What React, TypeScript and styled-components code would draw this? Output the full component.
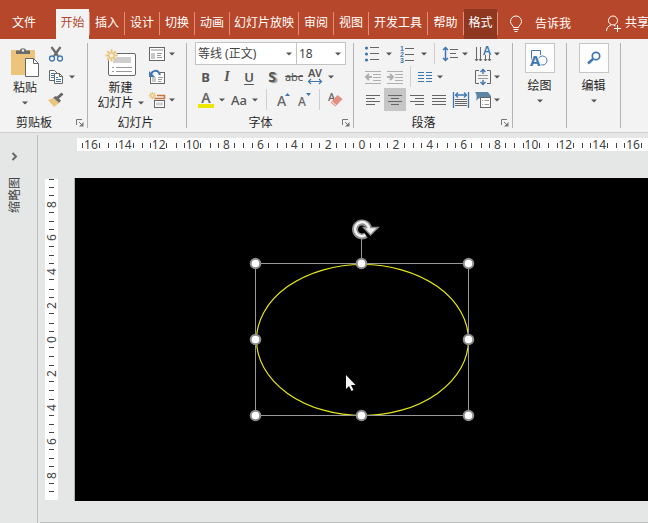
import React from "react";
import styled, { createGlobalStyle, css } from "styled-components";

const GlobalStyle = createGlobalStyle`
  *, *::before, *::after { box-sizing: border-box; }
  body {
    margin: 0;
    background: #e5e7e6;
    color: #262626;
    font: 12px/16px "Noto Sans", "Noto Sans CJK SC", sans-serif;
    overflow: hidden;
  }
  button, select { font: inherit; color: inherit; }
  svg { display: block; flex: none; overflow: visible; }
`;

const GREY = "#666666";
const BLUE = "#3f77b0";
const GOLD = "#ecc47a";

/* ---------- layout ---------- */

const Shell = styled.div`
  display: flex;
  flex-direction: column;
  min-height: 100vh;
`;

const TabBar = styled.nav`
  display: flex;
  align-items: stretch;
  padding-top: 9px;
  background: #b7472a;
  color: #fff;
  white-space: nowrap;
  overflow: hidden;
`;

const PlainButton = styled.button`
  display: flex;
  align-items: center;
  justify-content: center;
  padding: 0;
  border: 0;
  background: none;
`;

const Tab = styled(PlainButton)<{ $width: number; $look?: "active" | "context" }>`
  flex: none;
  width: ${(p) => p.$width}px;
  height: 30px;
  padding-bottom: 2px;
  ${(p) => p.$look === "active" && css`background: #f3f3f3; color: #b7472a;`}
  ${(p) => p.$look === "context" && css`background: #8f3721;`}
`;

const TabSpace = styled.span`
  flex: none;
  width: 8px;
`;

const TabDivider = styled.span`
  flex: none;
  width: 1px;
  height: 23px;
  margin-top: 3px;
  background: #e08f7c;
`;

const TellMe = styled(PlainButton)`
  flex: none;
  gap: 13px;
  margin-left: 12px;
`;

const Share = styled(PlainButton)`
  flex: none;
  gap: 4px;
  margin-left: auto;
  margin-right: -1px;
  padding-bottom: 2px;
`;

const Ribbon = styled.div`
  display: flex;
  padding-top: 3px;
  background: #f3f3f3;
  border-bottom: 1px solid #cfd0cf;
  overflow: hidden;
`;

const GroupBox = styled.section<{ $width: number }>`
  flex: none;
  width: ${(p) => p.$width}px;
  display: flex;
  flex-direction: column;
`;

const GroupDivider = styled.span`
  flex: none;
  width: 1px;
  margin: 1px 0 4px;
  background: #b3b3b3;
`;

const GroupBody = styled.div<{ $pad?: number }>`
  display: flex;
  height: 69px;
  padding-left: ${(p) => p.$pad ?? 0}px;
`;

const GroupFooter = styled.footer`
  display: flex;
  align-items: flex-end;
  height: 21px;
  padding: 4px 3px 1px 0;
`;

const GroupLabel = styled.span`
  flex: 1;
  text-align: center;
  line-height: 16px;
`;

const Launcher = styled(PlainButton)`
  width: 16px;
  height: 12px;
  justify-content: flex-end;
  align-items: flex-start;
`;

const Rows = styled.div<{ $width?: number }>`
  flex: none;
  width: ${(p) => (p.$width ? `${p.$width}px` : "auto")};
  display: flex;
  flex-direction: column;
`;

const Row = styled.div<{ $pad?: number }>`
  display: flex;
  height: 23px;
  padding-left: ${(p) => p.$pad ?? 0}px;
`;

const ToolButton = styled(PlainButton)<{ $width: number; $pressed?: boolean }>`
  flex: none;
  width: ${(p) => p.$width}px;
  background: ${(p) => (p.$pressed ? "#c6c6c6" : "none")};
`;

const Glyph = styled.span<{ $look?: "bold" | "italic" | "under" | "shadow" | "strike" }>`
  color: #555;
  font-size: 13px;
  font-weight: 500;
  ${(p) => p.$look === "bold" && css`font-weight: 700;`}
  ${(p) => p.$look === "italic" && css`font-family: "Liberation Serif", serif; font-size: 14px; font-style: italic; font-weight: 700;`}
  ${(p) => p.$look === "under" && css`font-weight: 600; text-decoration: underline; text-underline-offset: 2px;`}
  ${(p) => p.$look === "shadow" && css`font-size: 14px; font-weight: 700; text-shadow: 2px 1px 1px #999;`}
  ${(p) => p.$look === "strike" && css`font-size: 11px; font-weight: 400; text-decoration: line-through;`}
`;

const ToolDivider = styled.span<{ $space: number }>`
  flex: none;
  width: ${(p) => p.$space}px;
  display: flex;
  justify-content: center;
  padding: 1px 0;
  &::before { content: ""; width: 1px; background: #cfcfcf; }
`;

const BigButton = styled(PlainButton)<{ $width: number }>`
  flex: none;
  width: ${(p) => p.$width}px;
  flex-direction: column;
  justify-content: flex-start;
  padding-top: 3px;
  line-height: 15px;
`;

const BigIcon = styled.span`
  display: flex;
  align-items: center;
  height: 35px;
`;

const CaretLine = styled.span`
  display: flex;
  align-items: center;
  justify-content: center;
  gap: 4px;
  height: 15px;
`;

const MenuButton = styled(BigButton)`
  padding-top: 1px;
`;

const IconFrame = styled.span`
  display: flex;
  align-items: center;
  justify-content: center;
  width: 30px;
  height: 30px;
  margin-bottom: 5px;
  border: 1px solid #c6c6c6;
  background: #fdfdfd;
`;

const ComboWrap = styled.label<{ $width: number }>`
  display: grid;
  align-items: center;
  width: ${(p) => p.$width}px;
  & + & { margin-left: -1px; }
  > * { grid-area: 1 / 1; }
  > svg { justify-self: end; margin-right: 5px; pointer-events: none; }
`;

const Combo = styled.select`
  width: 100%;
  height: 23px;
  padding: 0 2px;
  border: 1px solid #c3c3c3;
  border-radius: 0;
  background: #fff;
  color: #444;
  appearance: none;
`;

/* ---------- workspace ---------- */

const Workspace = styled.main`
  flex: 1;
  display: flex;
`;

const ThumbPane = styled.aside`
  flex: none;
  width: 38px;
  margin-top: 2px;
  padding: 17px 8px 0 0;
  border-right: 1px solid #bcbebd;
  display: flex;
  flex-direction: column;
  align-items: center;
  gap: 16px;
`;

const PaneTitle = styled.span`
  writing-mode: vertical-rl;
  text-orientation: sideways;
  transform: rotate(180deg);
  line-height: 16px;
  color: #444;
`;

const Editor = styled.div`
  flex: 1;
  min-width: 0;
  display: flex;
  flex-direction: column;
  padding-top: 5px;
`;

const HRuler = styled.div`
  height: 13px;
  margin-left: 39px;
  overflow: hidden;
  background: #fff;
`;

const HScale = styled.div`
  display: grid;
  grid-template-columns: repeat(17, 1fr);
  height: 13px;
  margin: 0 -2px 0 -3px;
`;

const Stage = styled.div`
  flex: 1;
  display: flex;
  margin: 27px 0 21px;
`;

const VRuler = styled.div`
  flex: none;
  width: 13px;
  margin: 1px 16px 1px 7px;
  display: flex;
  flex-direction: column;
  justify-content: space-between;
  background: #fff;
`;

const VScale = styled.div`
  flex: 1;
  display: grid;
  grid-template-rows: repeat(9, 1fr);
  margin-top: 7px;
  margin-bottom: 8px;
`;

const Unit = styled.div`
  display: grid;
  align-items: center;
  justify-items: center;
  min-height: 0;
  > * { grid-area: 1 / 1; }
`;

const Ticks = styled.span<{ $vertical?: boolean }>`
  display: flex;
  justify-content: space-between;
  ${(p) => (p.$vertical
    ? css`flex-direction: column; height: 100%; margin-right: 1px;`
    : css`width: 100%; margin-bottom: 1px;`)}
`;

const Tick = styled.i<{ $vertical?: boolean; $blank?: boolean }>`
  flex: none;
  width: ${(p) => (p.$vertical ? 5 : 1)}px;
  height: ${(p) => (p.$vertical ? 1 : 5)}px;
  margin: ${(p) => (p.$vertical ? "0 auto" : "0")};
  background: ${(p) => (p.$blank ? "transparent" : "#444")};
`;

const Num = styled.span<{ $vertical?: boolean }>`
  color: #444;
  line-height: 13px;
  margin-bottom: ${(p) => (p.$vertical ? 0 : 2)}px;
  ${(p) => p.$vertical && css`writing-mode: vertical-rl; transform: rotate(180deg);`}
`;

const Slide = styled.div`
  position: relative;
  flex: 1;
  min-width: 0;
  border-left: 1px solid #b0b2b1;
  background: #000;
  overflow: hidden;
`;

const SelectedShape = styled.svg`
  position: absolute;
  left: 172px;
  top: 36px;
`;

const Pointer = styled.svg`
  position: absolute;
  left: 270px;
  top: 196px;
`;

const BottomLine = styled.div`
  height: 1px;
  margin-left: 2px;
  background: #bcbebd;
`;

/* ---------- icons ---------- */

const Caret = () => (
  <svg width="6" height="4" viewBox="0 0 6 4"><path d="M0 .5h6L3 3.500z" fill="#555" /></svg>
);

const Svg = ({ w = 16, h = 16, children }: { w?: number; h?: number; children: React.ReactNode }) => (
  <svg width={w} height={h} viewBox={`0 0 ${w} ${h}`} fill="none" stroke={GREY} aria-hidden="true">{children}</svg>
);

const BulbIcon = () => (
  <Svg w={12} h={17}>
    <g stroke="#fff">
      <path d="M3.5 11.5c0-2-3-3-3-6a5 5 0 0 1 11 0c0 3-3 4-3 6z" />
      <path d="M3.5 13.5h5M4.500 15.500h3" />
    </g>
  </Svg>
);

const PersonIcon = () => (
  <Svg w={15} h={17}>
    <g stroke="#fff">
      <circle cx="7" cy="5.500" r="4.500" />
      <path d="M.5 16c0-3 2-5 4.500-6M8 10.500l1.500.5M8 13.500h7M11.500 10v7" />
    </g>
  </Svg>
);

const PasteIcon = () => (
  <Svg w={28} h={31}>
    <path d="M0 3h24v25H0z" fill={GOLD} stroke="none" />
    <path d="M5 7V3.500h4C9 .5 15 .5 15 3.500h4V7z" fill="#6b6b6b" stroke="none" />
    <circle cx="12" cy="3.500" r="1.200" fill="#f3f3f3" stroke="none" />
    <path d="M14.500 11.500h8l5 5v13h-13z" fill="#fff" />
    <path d="M22.500 11.500v5h5" />
  </Svg>
);

const CutIcon = () => (
  <Svg>
    <path d="M3.500 1l6.500 9M12.500 1L6 10" strokeWidth="2.200" stroke="#6b6b6b" />
    <circle cx="4" cy="12.500" r="2.500" stroke={BLUE} strokeWidth="1.300" />
    <circle cx="12" cy="12.500" r="2.500" stroke={BLUE} strokeWidth="1.300" />
  </Svg>
);

const CopyIcon = () => (
  <Svg>
    <path d="M1.500 1.500h5l3 3v7h-8z" fill="#fff" />
    <path d="M3 4.500h3M3 6.500h3M3 8.500h3" stroke={BLUE} />
    <path d="M6.500 4.500h5l3 3v7h-8z" fill="#fff" />
    <path d="M11.500 4.500v3h3" />
    <path d="M8 8.500h2M8 10.500h5M8 12.500h5" stroke={BLUE} />
  </Svg>
);

const BrushIcon = () => (
  <Svg>
    <path d="M0 8l5-2 6 5-5 4z" fill={GOLD} stroke="none" />
    <path d="M5 5.500l3-1.500 5 4.500-2 2.500z" fill="#6b6b6b" stroke="none" />
    <path d="M9.500 6l5-4.500" strokeWidth="3" />
  </Svg>
);

const Burst = ({ x, y, r }: { x: number; y: number; r: number }) => (
  <g transform={`translate(${x} ${y})`} stroke={GOLD} strokeWidth={r > 4 ? 2 : 1.4}>
    {[0, 45, 90, 135].map((a) => (
      <path key={a} d={`M${-r} 0H${-r * 0.4}M${r * 0.4} 0H${r}`} transform={`rotate(${a})`} />
    ))}
    <circle r={r * 0.4} strokeWidth="1" />
  </g>
);

const NewSlideIcon = () => (
  <Svg w={31} h={28}>
    <rect x="3.500" y="4.500" width="27" height="22" rx="1.500" fill="#fff" />
    <path d="M8 8h18v6H8z" fill="#cfcfcf" stroke="none" />
    <path d="M7 18.500h2M11 18.500h16M7 22.500h2M11 22.500h16" stroke="#999" />
    <circle cx="6" cy="6" r="6" fill="#f3f3f3" stroke="none" />
    <Burst x={6.5} y={6.5} r={6} />
  </Svg>
);

const LayoutIcon = () => (
  <Svg>
    <rect x=".5" y="1.500" width="15" height="13" fill="#fff" />
    <path d="M2 3h12v2H2zM2 7h4v6H2z" fill="#c8c8c8" stroke="none" />
    <path d="M8 7.500h5M8 9.500h4M8 11.500h5" stroke="#999" />
  </Svg>
);

const ResetIcon = () => (
  <Svg>
    <rect x="1.500" y="3.500" width="14" height="11" fill="#fff" />
    <path d="M3 8h4v5H3z" fill="#c8c8c8" stroke="none" />
    <path d="M9 8.500h5M9 10.500h4M9 12.500h3" stroke="#999" />
    <path d="M0 0h11v6H0z" fill="#f3f3f3" stroke="none" />
    <path d="M2 6c1-5 7-6 9 0" stroke={BLUE} strokeWidth="2" />
    <path d="M0 2v6h6z" fill={BLUE} stroke="none" />
  </Svg>
);

const SectionIcon = () => (
  <Svg>
    <Burst x={3.5} y={3.5} r={3.5} />
    <path d="M8 3.500h7.500v3h-10" stroke="#c8733d" strokeWidth="1.500" />
    <rect x="5.500" y="8.500" width="10" height="7" fill="#fff" />
    <path d="M7 10.500h7v3H7z" fill="#d0d0d0" stroke="none" />
  </Svg>
);

const LauncherIcon = () => (
  <svg width="8" height="8" viewBox="0 0 8 8" fill="none" stroke="#777">
    <path d="M.5 6V.5H6M3 3l3 3" /><path d="M7.500 3v4.500H3z" fill="#777" stroke="none" />
  </svg>
);

const SpacingIcon = () => (
  <svg width="16" height="16" viewBox="0 0 16 16" fill="none">
    <text x="8" y="8" textAnchor="middle" fontSize="11" fontWeight="600" fill="#555">AV</text>
    <path d="M1 12.500h14M4 10L1.500 12.500 4 15M12 10l2.500 2.500L12 15" stroke={BLUE} strokeWidth="1.200" />
  </svg>
);

const FontColorIcon = () => (
  <svg width="16" height="18" viewBox="0 0 16 18">
    <text x="8" y="12" textAnchor="middle" fontSize="14" fontWeight="600" fill="#666">A</text>
    <path d="M0 13h16v4H0z" fill="#ece800" />
  </svg>
);

const ResizeFontIcon = ({ up }: { up?: boolean }) => (
  <svg width="14" height="16" viewBox="0 0 14 16">
    <text x="0" y="14" fontSize={up ? 14 : 12} fontWeight="500" fill="#666">A</text>
    <path d={up ? "M8 4l2.500-3L13 4z" : "M8 1h5l-2.500 3z"} fill={BLUE} />
  </svg>
);

const EraserIcon = () => (
  <svg width="16" height="16" viewBox="0 0 16 16">
    <text x="1" y="9" fontSize="11" fontWeight="500" fill="#666">A</text>
    <path d="M3.500 10.500l7-7.500 5 4-7 7.500z" fill="#e58e82" />
    <path d="M4.500 9.500l5 4" stroke="#f3f3f3" />
  </svg>
);

const BulletsIcon = () => (
  <Svg>
    <g fill={BLUE} stroke="none"><circle cx="2.500" cy="2" r="1.600" /><circle cx="2.500" cy="8" r="1.600" /><circle cx="2.500" cy="14" r="1.600" /></g>
    <path d="M6 1.500h9M6 7.500h9M6 13.500h9" />
  </Svg>
);

const NumbersIcon = () => (
  <svg width="16" height="18" viewBox="0 0 16 18" fontFamily="Liberation Sans, sans-serif">
    {[1, 2, 3].map((n) => (
      <text key={n} x="1" y={n * 6} fontSize="7" fontWeight="700" fill={BLUE}>{n}</text>
    ))}
    <path d="M6 3.500h9M6 9.500h9M6 15.500h9" stroke={GREY} />
  </svg>
);

const LineSpacingIcon = () => (
  <Svg>
    <path d="M3.500 1v14M1 4l2.500-2.500L6 4M1 12l2.500 2.500L6 12" stroke={BLUE} strokeWidth="1.500" />
    <path d="M8 3.500h8M8 7.500h6M8 11.500h8" />
  </Svg>
);

const TextDirectionIcon = () => (
  <svg width="16" height="16" viewBox="0 0 16 16" fill="none">
    <path d="M1.500 1v14M5.500 1v14M10.500 9v6M14.500 9v6M0 13l1.500 2L3 13M4 13l1.500 2L7 13M9 13l1.500 2 1.500-2M13 13l1.500 2 1.500-2" stroke={GREY} />
    <text x="8" y="9" fontSize="12" fontWeight="600" fill={BLUE}>A</text>
  </svg>
);

const IndentIcon = ({ outdent }: { outdent?: boolean }) => (
  <Svg>
    <g stroke="#b0b0b0">
      <path d="M0 2.500h16M8 5.500h8M8 8.500h8M8 11.500h8M0 14.500h16" />
      <path d={outdent ? "M7 8H1M4 5L1 8l3 3" : "M0 8h6M3 5l3 3-3 3"} strokeWidth="2" />
    </g>
  </Svg>
);

const ColumnsIcon = () => (
  <Svg w={14} h={12}>
    <path d="M0 1.500h6M0 4.500h6M0 7.500h6M0 10.500h6M8 1.500h6M8 4.500h6M8 7.500h6M8 10.500h6" stroke={BLUE} />
  </Svg>
);

const AlignTextIcon = () => (
  <Svg>
    <path d="M4 1.500H.5v13H4M12 1.500h3.500v13H12" />
    <path d="M3 6.500h10M3 9.500h10" stroke="#999" />
    <path d="M8 0v5M5.500 3L8 .5 10.500 3M8 11v5M5.500 13L8 15.500l2.500-2.500" stroke={BLUE} strokeWidth="1.400" />
  </Svg>
);

const AlignIcon = ({ mode }: { mode: "left" | "center" | "right" | "justify" }) => {
  const short = { left: "M0 4.500h9M0 10.500h9", center: "M3 4.500h8M3 10.500h8", right: "M5 4.500h9M5 10.500h9", justify: "M0 4.500h14M0 10.500h14" }[mode];
  return <Svg w={14} h={12}><path d={`M0 1.500h14M0 7.500h14${short}`} /></Svg>;
};

const DistributeIcon = () => (
  <Svg>
    <path d="M.5 0v16M15.500 0v16M3 3h10M5 .5L2.500 3 5 5.500M11 .5L13.500 3 11 5.500" stroke={BLUE} strokeWidth="1.300" />
    <path d="M2 7.500h12M2 9.500h12M2 11.500h12M2 13.500h12" />
  </Svg>
);

const SmartArtIcon = () => (
  <Svg>
    <path d="M0 0h13l3 4v3H7C6 5 3 6 1 9c1-4 1-6-1-9z" fill="#5d86a5" stroke="none" />
    <rect x="5.500" y="5.500" width="10" height="10" fill="#fff" />
    <path d="M7 8.500h1M9.500 8.500H14M7 12.500h1M9.500 12.500H14" stroke="#999" />
  </Svg>
);

const DrawIcon = () => (
  <svg width="17" height="17" viewBox="0 0 17 17" fill="none" stroke={BLUE}>
    <path d="M.5 10V.5h9V5" />
    <circle cx="11.500" cy="10.500" r="4.500" fill="#fff" />
    <text x="-1" y="16" fontSize="15" fontWeight="700" fill={BLUE} stroke="#fff" strokeWidth="2" paintOrder="stroke">A</text>
  </svg>
);

const SearchIcon = () => (
  <svg width="14" height="14" viewBox="0 0 14 14" fill="none" stroke={BLUE}>
    <circle cx="9" cy="5" r="3.700" strokeWidth="1.700" /><path d="M6 8l-5 4.500" strokeWidth="2.500" />
  </svg>
);

const ChevronIcon = () => (
  <svg width="5" height="9" viewBox="0 0 5 9" fill="none"><path d="M.5 1L4 4.500.5 8" stroke={GREY} strokeWidth="2" /></svg>
);

/* ---------- parts ---------- */

const Tool = ({ label, width, pressed, children }: { label: string; width: number; pressed?: boolean; children: React.ReactNode }) => (
  <ToolButton type="button" aria-label={label} aria-pressed={pressed} $width={width} $pressed={pressed}>{children}</ToolButton>
);

const Drop = ({ label, width }: { label: string; width: number }) => (
  <Tool label={`${label}选项`} width={width}><Caret /></Tool>
);

type GroupProps = { title?: string; width: number; pad?: number; launcher?: boolean; children: React.ReactNode };

const Group = ({ title, width, pad, launcher, children }: GroupProps) => (
  <>
    <GroupBox $width={width} aria-label={title}>
      <GroupBody $pad={pad}>{children}</GroupBody>
      {title && (
        <GroupFooter>
          <GroupLabel>{title}</GroupLabel>
          {launcher && <Launcher type="button" aria-label={`${title}设置`}><LauncherIcon /></Launcher>}
        </GroupFooter>
      )}
    </GroupBox>
    <GroupDivider />
  </>
);

const RulerUnit = ({ value, vertical, last }: { value: number; vertical?: boolean; last?: boolean }) => (
  <Unit>
    <Ticks $vertical={vertical}>
      {[0, 1, 2, 3, 4].map((i) => (
        <Tick key={i} $vertical={vertical} $blank={i === 2 || (i === 4 && !last)} />
      ))}
    </Ticks>
    <Num $vertical={vertical}>{value}</Num>
  </Unit>
);

const tabs: { name: string; width: number; look?: "active" | "context" }[] = [
  { name: "开始", width: 33, look: "active" },
  { name: "插入", width: 34 },
  { name: "设计", width: 34 },
  { name: "切换", width: 34 },
  { name: "动画", width: 34 },
  { name: "幻灯片放映", width: 68 },
  { name: "审阅", width: 34 },
  { name: "视图", width: 34 },
  { name: "开发工具", width: 58 },
  { name: "帮助", width: 35 },
  { name: "格式", width: 33, look: "context" },
];

const horizontal = [16, 14, 12, 10, 8, 6, 4, 2, 0, 2, 4, 6, 8, 10, 12, 14, 16];
const vertical = [8, 6, 4, 2, 0, 2, 4, 6, 8];
const handles = [
  [8.5, 49.5], [114.5, 49.5], [221.5, 49.5],
  [8.5, 125.5], [221.5, 125.5],
  [8.5, 201.5], [114.5, 201.5], [221.5, 201.5],
];

export default function App() {
  return (
    <Shell>
      <GlobalStyle />
      <TabBar>
        <Tab type="button" $width={48}>文件</Tab>
        <TabSpace />
        {tabs.map((t) => (
          <React.Fragment key={t.name}>
            <Tab type="button" $width={t.width} $look={t.look}>{t.name}</Tab>
            <TabDivider />
          </React.Fragment>
        ))}
        <TellMe type="button"><BulbIcon />告诉我</TellMe>
        <Share type="button"><PersonIcon />共享</Share>
      </TabBar>

      <Ribbon>
        <Group title="剪贴板" width={87} pad={4} launcher>
          <BigButton type="button" $width={42}>
            <BigIcon><PasteIcon /></BigIcon>
            粘贴
            <CaretLine><Caret /></CaretLine>
          </BigButton>
          <Rows>
            <Row><Tool label="剪切" width={20}><CutIcon /></Tool></Row>
            <Row><Tool label="复制" width={20}><CopyIcon /></Tool><Drop label="复制" width={12} /></Row>
            <Row><Tool label="格式刷" width={20}><BrushIcon /></Tool></Row>
          </Rows>
        </Group>

        <Group title="幻灯片" width={98} pad={6}>
          <BigButton type="button" $width={53}>
            <BigIcon><NewSlideIcon /></BigIcon>
            新建
            <CaretLine>幻灯片<Caret /></CaretLine>
          </BigButton>
          <Rows>
            <Row><Tool label="版式" width={20}><LayoutIcon /></Tool><Drop label="版式" width={10} /></Row>
            <Row><Tool label="重置" width={20}><ResetIcon /></Tool></Row>
            <Row><Tool label="节" width={20}><SectionIcon /></Tool><Drop label="节" width={10} /></Row>
          </Rows>
        </Group>

        <Group title="字体" width={166} pad={8} launcher>
          <Rows>
            <Row>
              <ComboWrap $width={102}>
                <Combo aria-label="字体"><option>等线 (正文)</option></Combo><Caret />
              </ComboWrap>
              <ComboWrap $width={50}>
                <Combo aria-label="字号"><option>18</option></Combo><Caret />
              </ComboWrap>
            </Row>
            <Row>
              <Tool label="加粗" width={21}><Glyph $look="bold">B</Glyph></Tool>
              <Tool label="倾斜" width={22}><Glyph $look="italic">I</Glyph></Tool>
              <Tool label="下划线" width={22}><Glyph $look="under">U</Glyph></Tool>
              <Tool label="阴影" width={24}><Glyph $look="shadow">S</Glyph></Tool>
              <Tool label="删除线" width={20}><Glyph $look="strike">abc</Glyph></Tool>
              <Tool label="字符间距" width={22}><SpacingIcon /></Tool>
              <Drop label="字符间距" width={9} />
            </Row>
            <Row>
              <Tool label="字体颜色" width={22}><FontColorIcon /></Tool>
              <Drop label="字体颜色" width={9} />
              <Tool label="更改大小写" width={26}><Glyph>Aa</Glyph></Tool>
              <Drop label="更改大小写" width={6} />
              <ToolDivider $space={17} />
              <Tool label="增大字号" width={18}><ResizeFontIcon up /></Tool>
              <Tool label="减小字号" width={24}><ResizeFontIcon /></Tool>
              <ToolDivider $space={5} />
              <Tool label="清除格式" width={26}><EraserIcon /></Tool>
            </Row>
          </Rows>
        </Group>

        <Group title="段落" width={158} launcher>
          <Rows $width={118}>
            <Row $pad={7}>
              <Tool label="项目符号" width={22}><BulletsIcon /></Tool><Drop label="项目符号" width={12} />
              <Tool label="编号" width={24}><NumbersIcon /></Tool><Drop label="编号" width={9} />
              <ToolDivider $space={12} />
              <Tool label="行距" width={20}><LineSpacingIcon /></Tool><Drop label="行距" width={9} />
            </Row>
            <Row $pad={7}>
              <Tool label="降低列表级别" width={24}><IndentIcon outdent /></Tool>
              <Tool label="提高列表级别" width={20}><IndentIcon /></Tool>
              <ToolDivider $space={10} />
              <Tool label="分栏" width={20}><ColumnsIcon /></Tool><Drop label="分栏" width={10} />
            </Row>
            <Row $pad={7}>
              <Tool label="左对齐" width={23}><AlignIcon mode="left" /></Tool>
              <Tool label="居中" width={22} pressed><AlignIcon mode="center" /></Tool>
              <Tool label="右对齐" width={22}><AlignIcon mode="right" /></Tool>
              <Tool label="两端对齐" width={22}><AlignIcon mode="justify" /></Tool>
              <Tool label="分散对齐" width={22}><DistributeIcon /></Tool>
            </Row>
          </Rows>
          <Rows>
            <Row><Tool label="文字方向" width={22}><TextDirectionIcon /></Tool><Drop label="文字方向" width={6} /></Row>
            <Row><Tool label="对齐文本" width={22}><AlignTextIcon /></Tool><Drop label="对齐文本" width={6} /></Row>
            <Row><Tool label="转换为 SmartArt" width={22}><SmartArtIcon /></Tool><Drop label="SmartArt" width={6} /></Row>
          </Rows>
        </Group>

        <Group width={53}>
          <MenuButton type="button" $width={53}>
            <IconFrame><DrawIcon /></IconFrame>
            绘图
            <CaretLine><Caret /></CaretLine>
          </MenuButton>
        </Group>
        <Group width={53}>
          <MenuButton type="button" $width={53}>
            <IconFrame><SearchIcon /></IconFrame>
            编辑
            <CaretLine><Caret /></CaretLine>
          </MenuButton>
        </Group>
      </Ribbon>

      <Workspace>
        <ThumbPane>
          <PlainButton type="button" aria-label="展开缩略图"><ChevronIcon /></PlainButton>
          <PaneTitle>缩略图</PaneTitle>
        </ThumbPane>
        <Editor>
          <HRuler>
            <HScale>{horizontal.map((n, i) => <RulerUnit key={i} value={n} />)}</HScale>
          </HRuler>
          <Stage>
            <VRuler>
              <Tick $vertical />
              <VScale>{vertical.map((n, i) => <RulerUnit key={i} value={n} vertical last={i === 8} />)}</VScale>
            </VRuler>
            <Slide>
              <SelectedShape width="230" height="210" viewBox="0 0 230 210" fill="none">
                <ellipse cx="115.500" cy="126" rx="106" ry="75.500" stroke="#e6e61a" strokeWidth="1.200" />
                <path d="M8.500 49.500h213v152h-213zM114.500 24v25" stroke="#999" />
                {handles.map(([x, y]) => (
                  <circle key={`${x}-${y}`} cx={x} cy={y} r="4.800" fill="#fff" stroke="#8c8c8c" strokeWidth="2" />
                ))}
                <path d="M119 21.200a7 7 0 1 1 3-6.200" stroke="#8f8f8f" strokeWidth="6" />
                <path d="M116.500 13.500h14.500l-7.500 7.500z" fill="#f2f2f2" stroke="#8f8f8f" strokeWidth="1.500" />
                <path d="M118.500 21.200a7 7 0 1 1 3.500-6.200" stroke="#f2f2f2" strokeWidth="2.500" />
              </SelectedShape>
              <Pointer width="12" height="18" viewBox="0 0 12 18">
                <path d="M1 1v14l3-3 2.500 5 2-1L6 11h4.500z" fill="#f4f4f4" />
              </Pointer>
            </Slide>
          </Stage>
          <BottomLine />
        </Editor>
      </Workspace>
    </Shell>
  );
}
